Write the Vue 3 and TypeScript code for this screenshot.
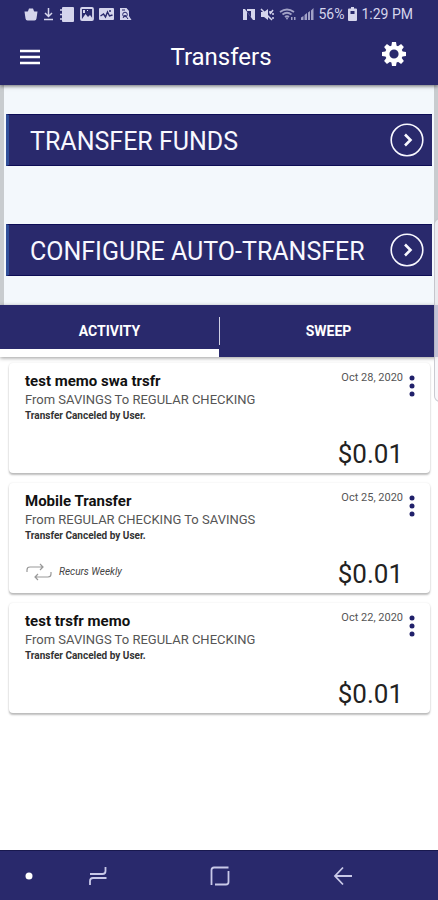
<script setup lang="ts">
import { ref } from 'vue'

interface Transfer {
  id: number
  title: string
  route: string
  status: string
  date: string
  amount: string
  recurs?: string
}

const actions: string[] = ['TRANSFER FUNDS', 'CONFIGURE AUTO-TRANSFER']
const tabs: string[] = ['ACTIVITY', 'SWEEP']
const activeTab = ref<string>('ACTIVITY')

const transfers: Transfer[] = [
  { id: 1, title: 'test memo swa trsfr', route: 'From SAVINGS To REGULAR CHECKING', status: 'Transfer Canceled by User.', date: 'Oct 28, 2020', amount: '$0.01' },
  { id: 2, title: 'Mobile Transfer', route: 'From REGULAR CHECKING To SAVINGS', status: 'Transfer Canceled by User.', date: 'Oct 25, 2020', amount: '$0.01', recurs: 'Recurs Weekly' },
  { id: 3, title: 'test trsfr memo', route: 'From SAVINGS To REGULAR CHECKING', status: 'Transfer Canceled by User.', date: 'Oct 22, 2020', amount: '$0.01' },
]
</script>

<template>
  <div class="screen">
    <header class="top">
      <div class="status-bar">
        <div class="notices">
          <svg width="14" height="14" viewBox="0 0 14 14" aria-hidden="true"><path d="M.5 4.500h13l-1 7q-.2 2-2 2h-7q-1.800 0-2-2z" fill="currentColor" /><path d="M3.500 5.500L5 1.500h4l1.500 4z" fill="currentColor" /></svg>
          <svg width="11" height="14" viewBox="0 0 11 14" aria-hidden="true"><path d="M5.500 1v8M2 6l3.500 3.500L9 6M1 12.500h9" fill="none" stroke="currentColor" stroke-width="1.500" /></svg>
          <svg width="16" height="15" viewBox="0 0 16 15" aria-hidden="true"><rect x="3" y="0" width="12" height="15" rx="1" fill="currentColor" /><path d="M1 3h3M1 7.500h3M1 12h3" stroke="currentColor" stroke-width="1.500" /></svg>
          <svg width="14" height="14" viewBox="0 0 14 14" aria-hidden="true"><rect x="1" y="1" width="12" height="12" rx="1" fill="none" stroke="currentColor" stroke-width="1.800" /><path d="M2 12l3.500-5 2.500 3 2-2 3 4zM3 3h2v3H3zM7 3h1v1H7z" fill="currentColor" /></svg>
          <svg width="15" height="14" viewBox="0 0 15 14" aria-hidden="true"><rect x="0" y="1" width="15" height="12" rx="1" fill="currentColor" /><path d="M1.500 9l3-2 2 3 2-5 2 4 3-1M10 4h2" fill="none" stroke="#29296c" stroke-width="1.400" /></svg>
          <svg width="13" height="14" viewBox="0 0 13 14" aria-hidden="true"><path d="M1 1h6.500L10 4v5l2.500 4H1z" fill="currentColor" /><circle cx="6" cy="7.500" r="2.300" fill="none" stroke="#29296c" /><path d="M3 3h3M4 11l2-3 3 4" fill="none" stroke="#29296c" /></svg>
        </div>
        <div class="signals">
          <svg width="14" height="13" viewBox="0 0 14 13" aria-hidden="true"><path d="M1 12V1h2l6 8V1h4v11h-2L5 4v8z" fill="currentColor" /><path d="M1 1h2v11H1zM5 1h4v2H5z" fill="currentColor" /></svg>
          <svg width="15" height="13" viewBox="0 0 15 13" aria-hidden="true"><path d="M1 4h3l4-3v11L4 9H1z" fill="currentColor" /><path d="M1 1l11 11M10 6l3-4M10 3v2M13 5v2M13 9v2" stroke="currentColor" stroke-width="1.500" fill="none" /></svg>
          <svg class="dim" width="17" height="13" viewBox="0 0 17 13" aria-hidden="true"><path d="M1 4Q8 -1 15 4M3.500 6.500q4.500-3.500 9 0M6 9q2-1.800 4 0" fill="none" stroke="currentColor" stroke-width="1.800" /><path d="M6.500 9.500h3L8 12zM12 9h1.500v3H12zM15 9h1.500v3H15z" fill="currentColor" /></svg>
          <svg class="dim" width="14" height="13" viewBox="0 0 14 13" aria-hidden="true"><path d="M1 12V9.500L3.500 8v4zM4.500 12V7L7 5v7zM8 12V4.500L10 3v9zM11 12V2.500L13.500 0v12z" fill="currentColor" /></svg>
          <span>56%</span>
          <svg width="9" height="14" viewBox="0 0 9 14" aria-hidden="true"><path d="M3 0h3v1.500h2q1 0 1 1V13q0 1-1 1H1q-1 0-1-1V2.500q0-1 1-1h2z" fill="currentColor" /><path d="M2.500 4h4v3h-4z" fill="#29296c" /></svg>
          <time>1:29 PM</time>
        </div>
      </div>
      <div class="app-bar">
        <button class="menu" aria-label="Menu">
          <svg width="20" height="16" viewBox="0 0 20 16" aria-hidden="true"><path d="M0 2h20M0 8h20M0 14h20" stroke="currentColor" stroke-width="2.400" /></svg>
        </button>
        <h1>Transfers</h1>
        <button class="settings" aria-label="Settings">
          <svg width="26" height="26" viewBox="0 0 26 26" aria-hidden="true">
            <g fill="currentColor">
              <path d="M11 1h4l.8 5h-5.600z" />
              <path d="M11 1h4l.8 5h-5.600z" transform="rotate(45 13 13)" />
              <path d="M11 1h4l.8 5h-5.600z" transform="rotate(90 13 13)" />
              <path d="M11 1h4l.8 5h-5.600z" transform="rotate(135 13 13)" />
              <path d="M11 1h4l.8 5h-5.600z" transform="rotate(180 13 13)" />
              <path d="M11 1h4l.8 5h-5.600z" transform="rotate(225 13 13)" />
              <path d="M11 1h4l.8 5h-5.600z" transform="rotate(270 13 13)" />
              <path d="M11 1h4l.8 5h-5.600z" transform="rotate(315 13 13)" />
            </g>
            <circle cx="13" cy="13" r="6.700" fill="none" stroke="currentColor" stroke-width="4.200" />
          </svg>
        </button>
      </div>
    </header>

    <main>
      <section class="actions">
        <button v-for="action in actions" :key="action" class="action">
          <span>{{ action }}</span>
          <svg width="34" height="34" viewBox="0 0 34 34" aria-hidden="true"><circle cx="17" cy="17" r="15.800" fill="none" stroke="currentColor" stroke-width="1.600" /><path d="M15 11.500l5.500 5.500-5.500 5.500" fill="none" stroke="currentColor" stroke-width="2.600" /></svg>
        </button>
      </section>

      <div class="tabs" role="tablist">
        <button
          v-for="tab in tabs"
          :key="tab"
          class="tab"
          role="tab"
          :class="{ active: tab === activeTab }"
          :aria-selected="tab === activeTab"
          @click="activeTab = tab"
        >
          {{ tab }}
        </button>
      </div>

      <ul class="list">
        <li v-for="item in transfers" :key="item.id" class="card">
          <div class="details">
            <h2>{{ item.title }}</h2>
            <p class="route">{{ item.route }}</p>
            <p class="state">{{ item.status }}</p>
            <p v-if="item.recurs" class="recurs">
              <svg width="26" height="18" viewBox="0 0 26 18" aria-hidden="true"><path d="M1 9V7q0-3 3-3h13M14 1l3 3-3 3M25 9v2q0 3-3 3H9M12 11l-3 3 3 3" fill="none" stroke="currentColor" stroke-width="1.200" /></svg>
              <span>{{ item.recurs }}</span>
            </p>
          </div>
          <div class="meta">
            <time>{{ item.date }}</time>
            <strong>{{ item.amount }}</strong>
          </div>
          <button class="more" :aria-label="'Options for ' + item.title">
            <svg width="6" height="22" viewBox="0 0 6 22" aria-hidden="true"><g fill="currentColor"><circle cx="3" cy="3" r="2.500" /><circle cx="3" cy="11" r="2.500" /><circle cx="3" cy="19" r="2.500" /></g></svg>
          </button>
        </li>
      </ul>
    </main>

    <nav class="system-nav" aria-label="System">
      <button aria-label="Hide navigation"><svg width="8" height="8" viewBox="0 0 8 8" aria-hidden="true"><circle cx="4" cy="4" r="3.500" fill="#fff" /></svg></button>
      <button aria-label="Recent apps"><svg width="20" height="20" viewBox="0 0 20 20" aria-hidden="true"><path d="M2 8h12.500q3 0 3-3V1M18.500 12H5q-3 0-3 3v4" fill="none" stroke="currentColor" stroke-width="1.800" /></svg></button>
      <button aria-label="Home"><svg width="20" height="20" viewBox="0 0 20 20" aria-hidden="true"><path d="M1.500 19V4q0-2.500 2.500-2.500h14.500M18.500 5v11q0 2.500-2.500 2.500H5" fill="none" stroke="currentColor" stroke-width="1.800" /></svg></button>
      <button aria-label="Back"><svg width="20" height="20" viewBox="0 0 20 20" aria-hidden="true"><path d="M19 10H2M10 1.500L2 10l8 8.500" fill="none" stroke="currentColor" stroke-width="1.800" /></svg></button>
    </nav>

    <div class="edge-handle"></div>
  </div>
</template>

<style>
body {
  margin: 0;
  background: #fff;
}
</style>

<style scoped>
* {
  box-sizing: border-box;
}

.screen {
  position: relative;
  display: flex;
  flex-direction: column;
  min-height: 100vh;
  overflow: hidden;
  font-family: Roboto, "Liberation Sans", sans-serif;
  color: #202020;
}

button {
  margin: 0;
  padding: 0;
  border: 0;
  background: none;
  color: inherit;
  font: inherit;
  cursor: pointer;
}

svg {
  display: block;
  flex: none;
}

h1,
h2,
p,
ul {
  margin: 0;
  padding: 0;
}

.top {
  z-index: 1;
  background: #29296c;
  color: #fff;
  box-shadow: 0 1px 4px rgba(0, 0, 0, 0.6);
}

.status-bar {
  display: flex;
  justify-content: space-between;
  height: 28px;
  padding: 0 25px 0 24px;
  color: #d5d5ec;
}

.notices,
.signals {
  display: flex;
  align-items: center;
}

.notices {
  gap: 5px;
}

.signals {
  gap: 4px;
  font-size: 14px;
  line-height: 28px;
}

.dim {
  opacity: 0.7;
}

.app-bar {
  display: grid;
  grid-template-columns: 1fr auto 1fr;
  align-items: center;
  height: 57px;
  padding: 0 20px;
}

.menu {
  justify-self: start;
}

.settings {
  justify-self: end;
  padding: 0 11px 6px 0;
}

h1 {
  padding-left: 4px;
  font-size: 24px;
  font-weight: 400;
  line-height: 32px;
}

.actions {
  display: flex;
  flex-direction: column;
  gap: 58px;
  padding: 29px 2px;
  border: solid #c8cccf;
  border-width: 0 4px;
  background: #f3f8fc;
}

.action {
  display: flex;
  align-items: center;
  justify-content: space-between;
  height: 52px;
  padding: 0 8px 0 21px;
  border-top: 1px solid #0d0d55;
  border-bottom: 1px solid #0d0d55;
  border-left: 3px solid #315099;
  background: #29296c;
  color: #f8f8ff;
  font-size: 25px;
  line-height: 32px;
  white-space: nowrap;
}

.action span {
  padding-top: 3px;
}

.tabs {
  display: flex;
  height: 52px;
  background: #29296c;
  box-shadow: 0 1px 4px rgba(0, 0, 0, 0.4);
}

.tab {
  position: relative;
  flex: 1;
  color: #fff;
  font-size: 14px;
  font-weight: 700;
  line-height: 20px;
}

.tab.active {
  border-bottom: 8px solid #fff;
  padding-top: 8px;
}

.tab + .tab::before {
  content: "";
  position: absolute;
  top: 12px;
  bottom: 12px;
  left: 0;
  width: 1px;
  background: #d0d0e4;
}

.list {
  display: flex;
  flex-direction: column;
  gap: 10px;
  padding: 6px 8px 24px 9px;
  list-style: none;
}

.card {
  display: flex;
  height: 110px;
  padding: 8px 15px 5px 16px;
  border-radius: 4px;
  background: #fff;
  box-shadow: 0 2px 2px rgba(0, 0, 0, 0.25), 0 0 2px rgba(0, 0, 0, 0.1);
}

.details {
  flex: 1;
}

h2 {
  color: #111;
  font-size: 15px;
  font-weight: 700;
  line-height: 20px;
}

.route {
  color: #555;
  font-size: 13px;
  line-height: 18px;
  white-space: nowrap;
}

.state {
  color: #333;
  font-size: 10px;
  font-weight: 700;
  line-height: 14px;
}

.recurs {
  display: flex;
  align-items: center;
  gap: 7px;
  padding: 20px 0 0 1px;
  color: #444;
  font-size: 10px;
  font-style: italic;
  line-height: 18px;
}

.recurs svg {
  color: #999;
}

.meta {
  display: flex;
  flex-direction: column;
  align-items: flex-end;
  justify-content: space-between;
}

.meta time {
  color: #555;
  font-size: 11px;
  line-height: 14px;
}

.meta strong {
  color: #222;
  font-size: 26px;
  font-weight: 400;
  line-height: 28px;
}

.more {
  align-self: flex-start;
  padding: 4px 0 0 6px;
  color: #20206a;
}

.system-nav {
  display: grid;
  grid-template-columns: 58px 80px 2fr 1fr;
  align-items: center;
  height: 50px;
  margin-top: auto;
  padding-right: 54px;
  border-top: 1px solid #18184e;
  background: #29296c;
  color: #c9c9e8;
}

.system-nav button {
  display: flex;
  align-items: center;
  justify-content: center;
  height: 48px;
}

.edge-handle {
  position: absolute;
  z-index: 2;
  top: 218px;
  right: -8px;
  width: 12px;
  height: 184px;
  border: 1px solid rgba(170, 170, 180, 0.6);
  border-radius: 6px;
  background: rgba(245, 245, 250, 0.75);
}
</style>
